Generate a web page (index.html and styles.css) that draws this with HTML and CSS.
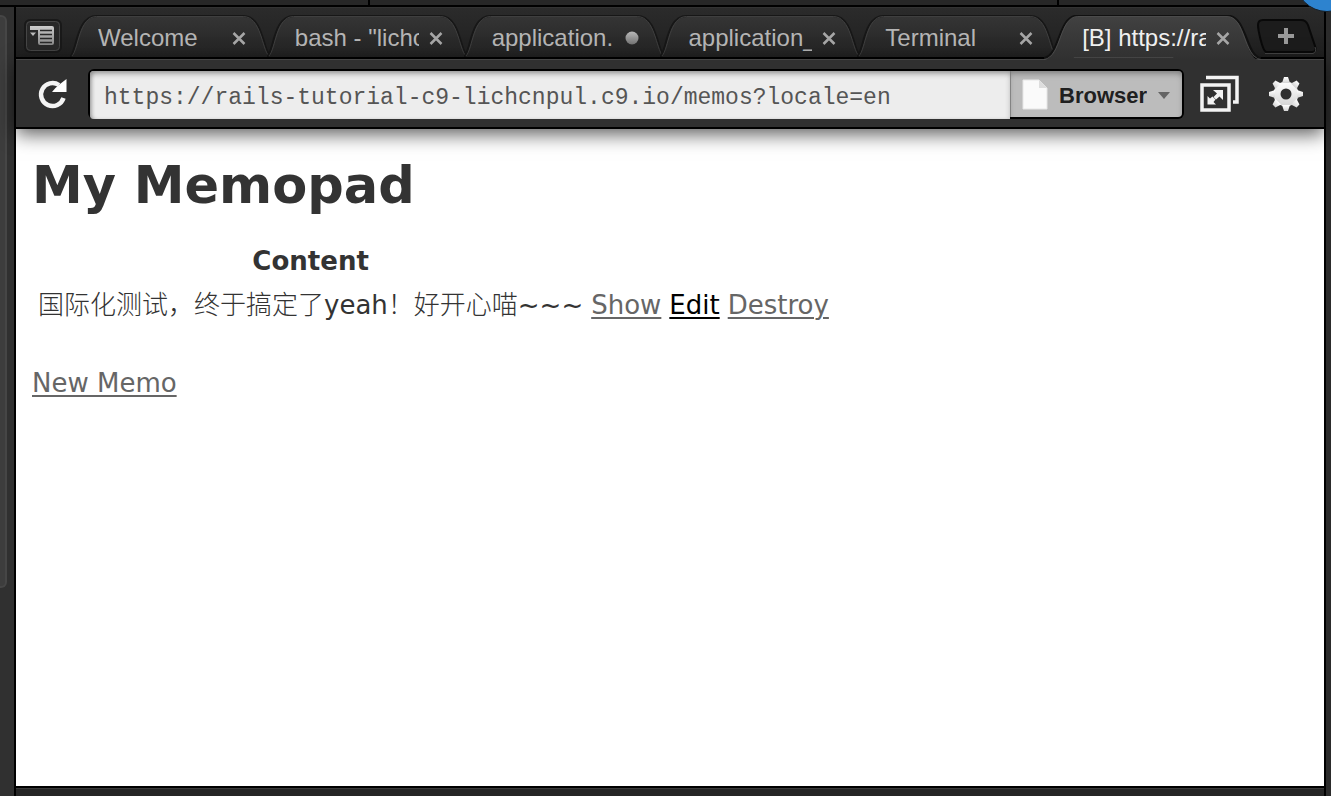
FILE: index.html
```html
<!DOCTYPE html>
<html lang="en">
<head>
<meta charset="utf-8">
<title>My Memopad</title>
<link rel="stylesheet" href="styles.css">
</head>
<body>
<svg class="defs" aria-hidden="true">
  <defs>
    <linearGradient id="tabFill" x1="0" y1="0" x2="0" y2="1"><stop offset="0" stop-color="#353535"/><stop offset="1" stop-color="#222"/></linearGradient>
    <linearGradient id="activeFill" x1="0" y1="0" x2="0" y2="1"><stop offset="0" stop-color="#414141"/><stop offset="1" stop-color="#303030"/></linearGradient>
    <linearGradient id="dotFill" x1="0" y1="0" x2="0" y2="1"><stop offset="0" stop-color="#b8b8b8"/><stop offset="1" stop-color="#737373"/></linearGradient>
    <linearGradient id="iconFill" x1="0" y1="0" x2="0" y2="1"><stop offset="0" stop-color="#fff"/><stop offset="1" stop-color="#d4d4d4"/></linearGradient>
    <linearGradient id="menuFill" x1="0" y1="0" x2="0" y2="1"><stop offset="0" stop-color="#ccc"/><stop offset="1" stop-color="#888"/></linearGradient>
    <symbol id="tabShape" viewBox="0 0 204 42" preserveAspectRatio="none">
      <path d="M0 42C7 37 6 1 27 1H176C197 1 196 37 204 42Z" fill="url(#tabFill)"/>
      <path d="M0 42C7 37 6 1 27 1H176C197 1 196 37 204 42" fill="none" stroke="#171717" stroke-width="2"/>
      <path d="M2 41C9 34 9 1.500 27 1.500H176C194 1.500 195 34 202 41" fill="none" stroke="#404040"/>
    </symbol>
    <symbol id="closeIcon" viewBox="0 0 14 14"><path d="M1.500 2L12.500 13M12.500 2L1.500 13" stroke="#a6a6a6" stroke-width="2.500" fill="none"/></symbol>
  </defs>
</svg>
<div class="ide">
  <header class="strip"><span class="cell first"></span><span class="cell second"></span><span class="cell"></span><span class="orb"></span></header>
  <aside class="rail"><div class="grip"></div></aside>
  <main class="pane">
    <nav class="tabs">
      <button class="menu" aria-label="Tab list">
        <svg width="38" height="34" viewBox="0 0 38 34">
          <rect x="1" y="1" width="36" height="32" rx="5" fill="#282828" stroke="#191919" stroke-width="2"/>
          <rect x="2.500" y="2.500" width="33" height="29" rx="4" fill="none" stroke="#464646"/>
          <path d="M6 7H28Q30 7 30 9V24Q30 26 28 26H16Q14 26 14 24V11H6Z" fill="url(#menuFill)"/>
          <path d="M16 11.500H28M16 15.500H28M16 19.500H28M16 23.500H28" stroke="#292929" stroke-width="1.500"/>
          <path d="M6 13.500H12L9 17Z" fill="#bbb"/>
        </svg>
      </button>
      <div class="tab"><svg class="shape"><use href="#tabShape"/></svg><a class="label" href="#">Welcome</a><button class="close" aria-label="Close Welcome"><svg width="14" height="14"><use href="#closeIcon"/></svg></button></div>
      <div class="tab"><svg class="shape"><use href="#tabShape"/></svg><a class="label" href="#">bash - "lichcnpul"</a><button class="close" aria-label="Close bash"><svg width="14" height="14"><use href="#closeIcon"/></svg></button></div>
      <div class="tab"><svg class="shape"><use href="#tabShape"/></svg><a class="label" href="#">application.</a><button class="close" aria-label="Close application"><svg width="14" height="14"><circle cx="7" cy="7" r="6.500" fill="url(#dotFill)"/></svg></button></div>
      <div class="tab"><svg class="shape"><use href="#tabShape"/></svg><a class="label" href="#">application_</a><button class="close" aria-label="Close application_"><svg width="14" height="14"><use href="#closeIcon"/></svg></button></div>
      <div class="tab"><svg class="shape"><use href="#tabShape"/></svg><a class="label" href="#">Terminal</a><button class="close" aria-label="Close Terminal"><svg width="14" height="14"><use href="#closeIcon"/></svg></button></div>
      <div class="tab active">
        <svg class="shape" viewBox="0 0 220 45" preserveAspectRatio="none">
          <path d="M0 45C18 42 14 1 34 1H184C204 1 200 42 216 45Z" fill="url(#activeFill)"/>
          <path d="M0 43C16 41 14 .500 34 .500H184C204 .500 203 41 218 43" fill="none" stroke="#111" stroke-width="2"/>
          <path d="M0 44.500C18 42 15 1.500 34 1.500H184C203 1.500 200 42 218 44.500" fill="none" stroke="#4b4b4b"/>
          <path d="M30 42.500H130" stroke="#444"/>
        </svg>
        <a class="label" href="#">[B] https://rails</a><button class="close" aria-label="Close browser"><svg width="14" height="14"><use href="#closeIcon"/></svg></button>
      </div>
      <button class="add" aria-label="New tab">
        <svg width="60" height="36" viewBox="0 0 60 36">
          <path d="M9 33C5 31 1 10 1 6Q1 1 6 1H44Q49 1 51 6L58 27Q60 33 55 33Z" fill="#1c1c1c" stroke="#090909" stroke-width="2"/>
          <path d="M8 34.500H56Q60 33 58 28" fill="none" stroke="#444"/>
          <path d="M29 9V25M21 17H37" stroke="#999" stroke-width="4"/>
        </svg>
      </button>
    </nav>
    <form class="toolbar">
      <button class="tool reload" type="button" aria-label="Reload">
        <svg width="32" height="32" viewBox="0 0 32 32">
          <path d="M27.500 20A11.500 11.500 0 1 1 23 7" fill="none" stroke="#f4f4f4" stroke-width="4.500"/>
          <path d="M30.500 1V14H16Q20 9 24 6Z" fill="#fff"/>
        </svg>
      </button>
      <div class="address">
        <input class="url" type="text" aria-label="Address" value="https://rails-tutorial-c9-lichcnpul.c9.io/memos?locale=en">
        <div class="kind">
          <svg width="26" height="32" viewBox="0 0 26 32"><path d="M1 1H17L25 9V30H1Z" fill="#fafafa" stroke="#e6e6e6"/><path d="M17 1V9H25Z" fill="#ddd"/></svg>
          <select class="mode" aria-label="View mode"><option>Browser</option></select>
          <svg class="caret" width="12" height="7" viewBox="0 0 12 7"><path d="M0 0H12L6 7Z" fill="#646464"/></svg>
        </div>
      </div>
      <button class="tool popout" type="button" aria-label="Open in new window">
        <svg width="40" height="38" viewBox="0 0 40 38">
          <path d="M6 2.500H37V27H33" fill="none" stroke="#f3f3f3" stroke-width="3.500"/>
          <rect x="2" y="10" width="27" height="25" fill="#303030" stroke="#f3f3f3" stroke-width="3.500"/>
          <path d="M13 15H23V25L19.500 21.500L16 24.500L13.500 22L17 18.500Z" fill="#f3f3f3"/>
          <path d="M7.500 21L10 23.500L12.500 21.500L15.500 24.500L13.500 27L16 29.500H7.500Z" fill="#f3f3f3"/>
        </svg>
      </button>
      <button class="tool" type="button" aria-label="Settings">
        <svg width="36" height="36" viewBox="-18 -18 36 36">
          <g fill="url(#iconFill)"><circle r="12.500"/>
            <g id="teeth"><path d="M-4 -11L-2 -17H2L4 -11Z"/><path d="M-4 11L-2 17H2L4 11Z"/><path d="M-11 -4L-17 -2V2L-11 4Z"/><path d="M11 -4L17 -2V2L11 4Z"/></g>
            <use href="#teeth" transform="rotate(45)"/>
          </g>
          <circle r="5.500" fill="#303030"/>
        </svg>
      </button>
    </form>
    <section class="page">
      <h1>My Memopad</h1>
      <table class="memos">
        <thead><tr><th>Content</th><th></th><th></th><th></th></tr></thead>
        <tbody><tr><td><span class="han" lang="zh-CN">国际化测试，终于搞定了</span>yeah<span class="han" lang="zh-CN">！好开心喵</span>~~~</td><td><a href="#">Show</a></td><td><a class="hot" href="#">Edit</a></td><td><a href="#">Destroy</a></td></tr></tbody>
      </table>
      <p class="new"><a href="#">New Memo</a></p>
    </section>
  </main>
  <aside class="edge"></aside>
  <footer class="foot"></footer>
</div>
</body>
</html>
```
FILE: styles.css
```css
* { box-sizing: border-box; }
body { margin: 0; background: #303030; }
button { padding: 0; border: 0; background: none; display: flex; }
svg { display: block; flex: none; }
.defs { position: absolute; width: 0; height: 0; }

.ide {
  display: grid;
  grid-template: auto 1fr auto / 16px 1fr 7px;
  min-height: 100vh;
  overflow: hidden;
}
.strip {
  grid-column: 1 / -1;
  position: relative;
  display: flex;
  height: 7px;
  background: #272727;
  border-bottom: 2px solid #000;
}
.cell { flex: 1; }
.first { flex: 0 0 27.8%; border-right: 2px solid #000; }
.second { flex: 0 0 51.8%; border-right: 2px solid #000; }
.orb {
  position: absolute;
  right: -28px;
  top: -52px;
  width: 64px;
  height: 64px;
  z-index: 3;
  border-radius: 50%;
  background: #2d83cf;
  border: 1px solid #17212b;
}
.rail {
  grid-row: 2 / 4;
  background: #303030;
  border-right: 2px solid #000;
  padding-top: 8px;
}
.grip {
  width: 7px;
  height: 72vh;
  min-height: 100px;
  background: #3d3d3d;
  border: 2px solid #464646;
  border-left: 0;
  border-radius: 0 6px 6px 0;
}
.edge { grid-column: 3; grid-row: 2 / 4; background: #2b2b2b; border-left: 2px solid #000; }
.foot {
  grid-column: 2;
  height: 10px;
  background: #262626;
  border-top: 2px solid #000;
  box-shadow: inset 0 1px #3a3a3a;
}
.pane { display: flex; flex-direction: column; min-width: 0; }

.tabs {
  display: flex;
  align-items: flex-end;
  height: 52px;
  padding: 0 7px 0 8px;
  background: linear-gradient(#2b2b2b, #1f1f1f);
  border-top: 1px solid #333;
  border-bottom: 2px solid #000;
  font: 24px/32px "Liberation Sans", Arial, sans-serif;
}
.menu { margin: 0 8px 4px 0; }
.tab {
  position: relative;
  display: flex;
  align-items: center;
  flex: 1 1 197px;
  min-width: 0;
  height: 42px;
  padding: 4px 21px 0 28px;
  gap: 10px;
}
.shape { position: absolute; left: 0; bottom: 0; width: calc(100% + 4px); height: 42px; }
.label {
  position: relative;
  flex: 1;
  overflow: hidden;
  white-space: nowrap;
  color: #b5b5b5;
  text-decoration: none;
}
.close { position: relative; }
.active { z-index: 1; margin-right: 6px; }
.active .shape { left: -10px; bottom: -3px; width: calc(100% + 22px); height: 45px; }
.active .label { color: #f0f0f0; }
.add { margin-bottom: 2px; }

.toolbar {
  position: relative;
  display: flex;
  align-items: center;
  height: 70px;
  padding: 2px 20px 0;
  background: #303030;
  border-bottom: 2px solid #000;
  box-shadow: inset 0 1px #474747, 0 5px 18px rgba(0, 0, 0, 0.65);
}
.reload { margin-right: 20px; }
.address {
  display: flex;
  flex: 1;
  min-width: 0;
  height: 50px;
  background: #000;
  border-radius: 6px;
  padding: 2px 2px 0;
}
.url {
  flex: 1;
  min-width: 0;
  margin: 0;
  padding: 5px 14px 0;
  border: 0;
  border-radius: 4px 0 0 4px;
  background: #ededed;
  box-shadow: inset 0 4px 6px -2px #8a8a8a, inset 3px 0 4px -2px #999;
  color: #555;
  font: 23px/30px "Liberation Mono", "Courier New", monospace;
}
.kind {
  display: flex;
  align-items: center;
  height: 46px;
  padding: 2px 12px 0;
  gap: 11px;
  background: #bcbcbc;
  border-radius: 0 4px 4px 0;
  box-shadow: inset 0 4px 6px -2px #777, inset 1px 0 #888;
}
.mode {
  appearance: none;
  width: 88px;
  padding: 2px 0 0;
  border: 0;
  background: none;
  color: #202020;
  font: bold 22px/30px "Liberation Sans", Arial, sans-serif;
}
.caret { pointer-events: none; }
.popout { margin: 0 28px 0 16px; }

.page {
  flex: 1;
  padding: 27px 16px 16px;
  background: #fff;
  color: #333;
  font: 26px/36px "DejaVu Sans", Verdana, "Noto Sans CJK SC", sans-serif;
}
h1 { margin: 0 0 21px; font-size: 51px; line-height: 60px; }
.memos { border-spacing: 4px; border-collapse: separate; }
.memos th, .memos td { padding: 2px; height: 40px; }
.han { font-family: "Noto Sans CJK SC", sans-serif; font-weight: 300; line-height: 1; }
.new { margin: 36px 0 0; }
.page a { color: #666; text-decoration: underline 2px; text-underline-offset: 3px; }
.page .hot { color: #000; }
```
